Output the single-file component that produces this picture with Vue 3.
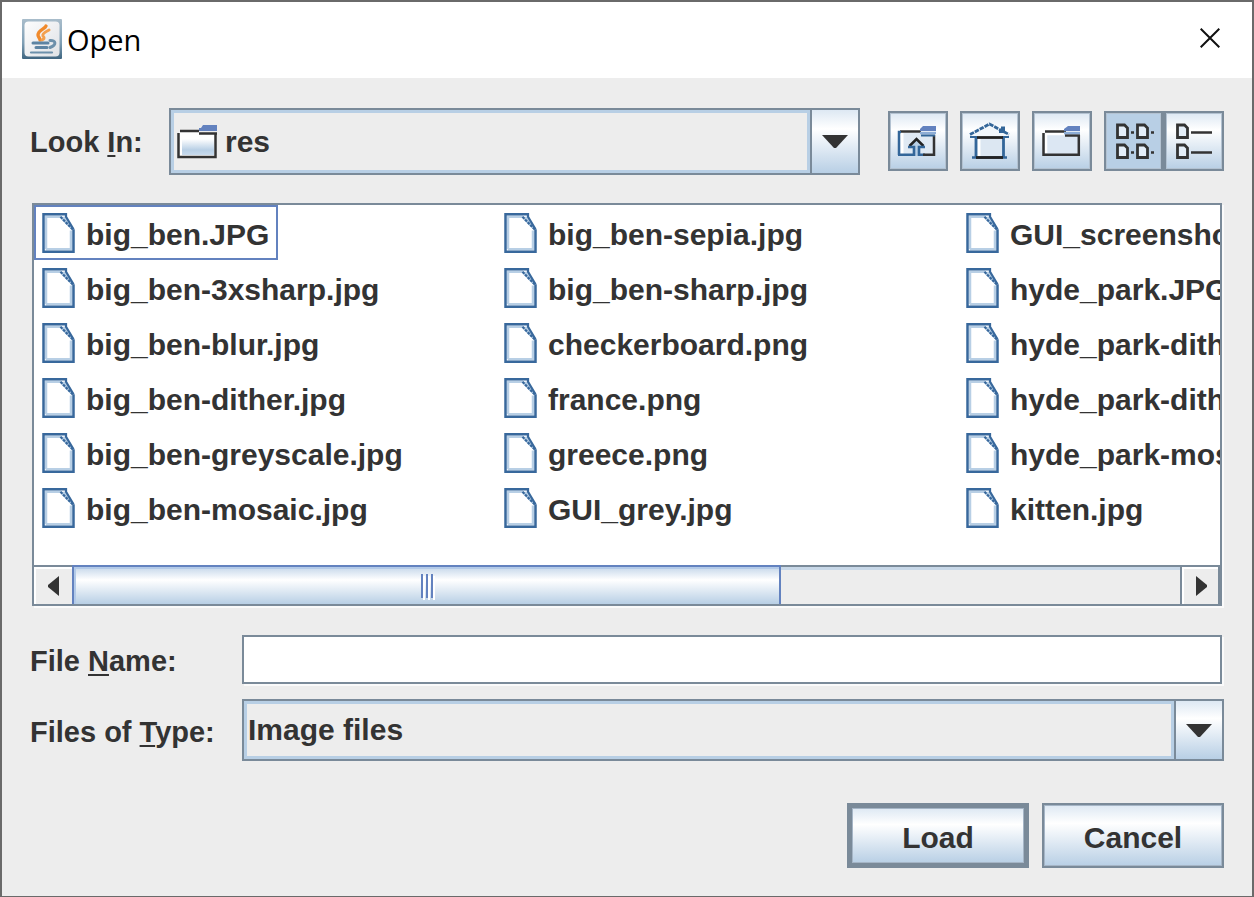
<script setup>
import { ref } from 'vue'

const files = [
  'big_ben.JPG',
  'big_ben-3xsharp.jpg',
  'big_ben-blur.jpg',
  'big_ben-dither.jpg',
  'big_ben-greyscale.jpg',
  'big_ben-mosaic.jpg',
  'big_ben-sepia.jpg',
  'big_ben-sharp.jpg',
  'checkerboard.png',
  'france.png',
  'greece.png',
  'GUI_grey.jpg',
  'GUI_screenshot.jpg',
  'hyde_park.JPG',
  'hyde_park-dither.jpg',
  'hyde_park-dither2.jpg',
  'hyde_park-mosaic.jpg',
  'kitten.jpg'
]

const focused = ref(0)
const folder = ref('res')
const fileName = ref('')
const fileType = ref('images')
const view = ref('list')
</script>

<template>
  <div class="dialog" role="dialog" aria-labelledby="dialog-title">
    <header class="titlebar">
      <svg class="logo" viewBox="0 0 40 40" aria-hidden="true">
        <defs>
          <linearGradient id="logo-edge" x1="0" y1="0" x2="0" y2="1">
            <stop offset="0" stop-color="#a9bdcb" />
            <stop offset="0.6" stop-color="#7f9fb5" />
            <stop offset="1" stop-color="#3f6580" />
          </linearGradient>
          <linearGradient id="logo-face" x1="0" y1="0" x2="1" y2="1">
            <stop offset="0" stop-color="#fdfdfd" />
            <stop offset="1" stop-color="#dfe2e6" />
          </linearGradient>
        </defs>
        <rect width="40" height="40" rx="1" fill="url(#logo-edge)" />
        <rect x="2.500" y="2.500" width="35" height="35" rx="4" fill="url(#logo-face)" />
        <g fill="none" stroke-linecap="round">
          <path d="M24 7C23 10 16 11 16 16C16 18 18 19 18 21" stroke="#f08a2c" stroke-width="3.400" />
          <path d="M27 11C23 13 20 15 21 17C23 19 22 20 20 21" stroke="#f3a04f" stroke-width="3" />
          <path d="M11 24H26M14 28.500H25" stroke="#5d84a3" stroke-width="3" />
          <path d="M28 21.500C34 21 35 26 28 28.500" stroke="#6c90ab" stroke-width="3" />
          <path d="M9 33.500H30" stroke="#6c90ab" stroke-width="2.200" />
        </g>
      </svg>
      <h1 id="dialog-title">Open</h1>
      <button class="close" type="button" aria-label="Close">
        <svg viewBox="0 0 20 20" aria-hidden="true">
          <path d="M0.7 0.7L19.3 19.3M19.3 0.7L0.7 19.3" stroke="#111" stroke-width="2" />
        </svg>
      </button>
    </header>

    <form class="content" @submit.prevent>
      <div class="look-row">
        <label class="look-label" for="look-in">Look <u>I</u>n:</label>
        <div class="combo combo-folder">
          <svg class="folder-icon" viewBox="0 0 40 34" aria-hidden="true">
            <defs>
              <linearGradient id="folder-fill" x1="0" y1="0" x2="0" y2="1">
                <stop offset="0.2" stop-color="#fff" />
                <stop offset="0.75" stop-color="#b8cfe5" />
                <stop offset="1" stop-color="#c8dbed" />
              </linearGradient>
            </defs>
            <path d="M1.5 32V8L4 6H22L24 9H39V32Z" fill="#fff" />
            <path d="M5 10H37V30H5Z" fill="url(#folder-fill)" />
            <path d="M3 6H22M1.5 8V32H38.5V9M22 8.5H40" fill="none" stroke="#333" stroke-width="2.5" />
            <path d="M26 0H40V6H22V3H24Z" fill="#6382bf" />
          </svg>
          <select id="look-in" v-model="folder">
            <option value="res">res</option>
          </select>
          <span class="arrow" aria-hidden="true"><svg viewBox="0 0 26 13"><path d="M0 0H26L14 13H12Z" fill="#333" /></svg></span>
        </div>
        <div class="tools">
          <button class="tool" type="button" aria-label="Up One Level">
            <svg viewBox="0 0 60 60" aria-hidden="true">
              <path d="M13 22H46V43H13Z" fill="#dfe9f3" />
              <path d="M14 22V43" stroke="#fff" stroke-width="3" />
              <path d="M12 20.5H33" stroke="#333" stroke-width="2.5" />
              <path d="M13 21H11V44M10 43.8H25M32 43.8H37" fill="none" stroke="#336699" stroke-width="2.5" />
              <path d="M35 43.8H46V24" fill="none" stroke="#333" stroke-width="2.5" />
              <path d="M35 15H48V20H32V18Z" fill="#6382bf" />
              <path d="M32 22H48" stroke="#8dadd6" stroke-width="2.5" />
              <path d="M33 24.5H47" stroke="#336699" stroke-width="2" />
              <path d="M28.500 29L21 36H26V45H31V36H36Z" fill="#b8cfe5" />
              <path d="M21.500 35L28.500 28L35.500 35" fill="none" stroke="#222" stroke-width="2.5" />
              <path d="M20 36H26V45M37 36H31V45" fill="none" stroke="#336699" stroke-width="2.6" />
            </svg>
          </button>
          <button class="tool" type="button" aria-label="Home">
            <svg viewBox="0 0 60 60" aria-hidden="true">
              <path d="M11 25L29.5 13L48 25V27H11Z" fill="#f2f7fb" />
              <path d="M17 28H43V46H17Z" fill="#dce7f2" />
              <path d="M19 28V45" stroke="#fff" stroke-width="3" />
              <path d="M39 18H41V15.500H45V22H39Z" fill="#336699" />
              <path d="M10 23.500L29.5 13L49 23.500" fill="none" stroke="#336699" stroke-width="2.8" stroke-dasharray="4.500 1" />
              <path d="M10 26H17M42 26H49" stroke="#336699" stroke-width="2" />
              <path d="M16 27V46M43.5 27V46" stroke="#336699" stroke-width="2.8" />
              <path d="M17 26.5H43" stroke="#222" stroke-width="2.8" />
              <path d="M12 46.5H47" stroke="#336699" stroke-width="2.6" />
              <path d="M16 46.5H43" stroke="#222" stroke-width="2.8" />
            </svg>
          </button>
          <button class="tool" type="button" aria-label="Create New Folder">
            <svg viewBox="0 0 60 60" aria-hidden="true">
              <path d="M11 22H47V43H11Z" fill="#dce7f3" />
              <path d="M14 42V23H32" fill="none" stroke="#fff" stroke-width="2.5" />
              <path d="M13 20.5H34M11.5 22V43.8H46.8V24M33 24.5H48" fill="none" stroke="#333" stroke-width="2.5" />
              <path d="M36 15H48V20H32V18Z" fill="#6382bf" />
              <path d="M32 22H48" stroke="#8dadd6" stroke-width="2.5" />
            </svg>
          </button>
          <div class="views" role="group" aria-label="View">
            <button class="tool" :class="{ pressed: view === 'list' }" type="button" aria-label="List" @click="view = 'list'">
              <svg viewBox="0 0 60 60" aria-hidden="true">
                <g fill="#e4eef8" stroke="#333" stroke-width="2.8">
                  <path d="M13.5 14H20.500L23.500 17V26.5H13.5Z" />
                  <path d="M33.5 14H40.500L43.500 17V26.5H33.5Z" />
                  <path d="M13.5 34H20.500L23.500 37V46.5H13.5Z" />
                  <path d="M33.5 34H40.500L43.500 37V46.5H33.5Z" />
                </g>
                <path d="M27 21.5H30M47 21.5H50M27 41.5H30M47 41.5H50" stroke="#333" stroke-width="2.5" />
              </svg>
            </button>
            <button class="tool" :class="{ pressed: view === 'details' }" type="button" aria-label="Details" @click="view = 'details'">
              <svg viewBox="0 0 60 60" aria-hidden="true">
                <g fill="#e4eef8" stroke="#333" stroke-width="2.8">
                  <path d="M13.5 14H20.500L23.500 17V26.5H13.5Z" />
                  <path d="M13.5 34H20.500L23.500 37V46.5H13.5Z" />
                </g>
                <path d="M27 21.5H48M27 41.5H48" stroke="#333" stroke-width="2.5" />
              </svg>
            </button>
          </div>
        </div>
      </div>

      <div class="list-pane">
        <ul class="files" role="listbox" aria-label="Files">
          <li
            v-for="(name, i) in files"
            :key="name"
            class="file"
            :class="{ focused: focused === i }"
            role="option"
            :aria-selected="focused === i"
            @click="focused = i"
          >
            <svg viewBox="0 0 13 16" aria-hidden="true">
              <path d="M0.5 0.5H9L12.5 6V15.5H0.5Z" fill="#fff" />
              <path d="M1.5 14.5V1.5H7.5M1.5 14.5H11.5V7" fill="none" stroke="#b8cfe5" />
              <path d="M7 1.500H9.500L12.500 6.500H11.500L8 3Z" fill="#b8cfe5" />
              <path d="M9.500 0.500H0.500V15.500H12.500V6.500" fill="none" stroke="#38689c" />
              <path d="M9.500 0V1.500L12.500 6.500" fill="none" stroke="#38689c" stroke-width="0.900" />
              <path d="M7.300 1.500L12.300 6.700" fill="none" stroke="#38689c" stroke-width="0.900" stroke-dasharray="1.100 0.400" />
            </svg>
            <span>{{ name }}</span>
          </li>
        </ul>
        <div class="scrollbar">
          <button class="scroll-btn left" type="button" aria-label="Scroll left">
            <svg viewBox="0 0 11 20" aria-hidden="true"><path d="M11 0V20L0 11V9Z" fill="#333" /></svg>
          </button>
          <div class="track">
            <div class="thumb"><i></i><i></i><i></i></div>
          </div>
          <button class="scroll-btn right" type="button" aria-label="Scroll right">
            <svg viewBox="0 0 11 20" aria-hidden="true"><path d="M0 0V20L11 11V9Z" fill="#333" /></svg>
          </button>
        </div>
      </div>

      <div class="fields">
        <label for="file-name">File <u>N</u>ame:</label>
        <input id="file-name" v-model="fileName" type="text" />
        <label for="file-type">Files of <u>T</u>ype:</label>
        <div class="combo combo-type">
          <select id="file-type" v-model="fileType">
            <option value="images">Image files</option>
          </select>
          <span class="arrow" aria-hidden="true"><svg viewBox="0 0 26 13"><path d="M0 0H26L14 13H12Z" fill="#333" /></svg></span>
        </div>
      </div>

      <div class="actions">
        <button class="action primary" type="submit">Load</button>
        <button class="action" type="button">Cancel</button>
      </div>
    </form>
  </div>
</template>

<style>
body {
  margin: 0;
  background: #ededed;
}
</style>

<style scoped>
* {
  box-sizing: border-box;
}

.dialog {
  display: flex;
  flex-direction: column;
  min-height: 100vh;
  border: 2px solid #6a6a6a;
  border-bottom-width: 1px;
  background: #ededed;
  color: #333;
  font: bold 30px/36px "Liberation Sans", Arial, sans-serif;
}

button,
input,
select {
  margin: 0;
  padding: 0;
  border: 0;
  border-radius: 0;
  background: none;
  color: inherit;
  font: inherit;
}

label {
  font-size: 29px;
}

svg {
  display: block;
}

u {
  text-decoration-thickness: 2px;
  text-underline-offset: 3px;
  text-decoration-skip-ink: none;
}

.titlebar {
  display: flex;
  align-items: center;
  height: 76px;
  padding: 0 32px 2px 20px;
  background: #fff;
}

.logo {
  width: 40px;
  height: 40px;
}

h1 {
  flex: 1;
  margin: 0 0 0 5px;
  padding-top: 2px;
  color: #000;
  font: 400 29px/40px "Open Sans", "Noto Sans", sans-serif;
}

.close {
  padding-bottom: 2px;
}

.close svg {
  width: 20px;
  height: 20px;
}

.content {
  display: flex;
  flex: 1;
  flex-direction: column;
  padding: 30px 28px 28px;
}

.look-row {
  display: flex;
  align-items: center;
}

.look-label {
  width: 139px;
}

.combo {
  display: flex;
  position: relative;
  flex: 1;
  min-width: 0;
  border: 2px solid #7a8a99;
  box-shadow: inset 0 0 0 1px #a9bdd1;
}

.combo select {
  flex: 1;
  min-width: 0;
  appearance: none;
  border: 3px solid #b8cfe5;
  outline: 0;
}

.combo-folder {
  height: 67px;
}

.combo-folder select {
  padding-left: 51px;
}

.combo-type {
  height: 62px;
}

.combo-type select {
  padding-left: 1px;
}

.folder-icon {
  position: absolute;
  left: 6px;
  top: 15px;
  width: 40px;
  height: 34px;
}

.arrow {
  display: flex;
  align-items: center;
  justify-content: center;
  width: 48px;
  border-left: 2px solid #7a8a99;
  background: linear-gradient(#dde8f3, #fff 30%, #b8cfe5);
  pointer-events: none;
}

.arrow svg {
  width: 26px;
  height: 13px;
}

.tools {
  display: flex;
  gap: 12px;
  margin: 0 0 2px 28px;
}

.tool {
  width: 60px;
  height: 60px;
  border: 2px solid #7a8a99;
  background: linear-gradient(#dde8f3, #fff 30%, #b8cfe5);
  box-shadow: inset 0 0 0 1px #b3c2d1;
}

.tool svg {
  width: 60px;
  height: 60px;
  margin: -2px;
}

.tool.pressed {
  background: #b8cfe5;
}

.views {
  display: flex;
}

.views .tool:first-child {
  border-right-width: 3px;
}

.list-pane {
  display: flex;
  flex: 1;
  flex-direction: column;
  margin: 28px 2px 0;
  border: 2px solid #7a8a99;
  background: #fff;
  box-shadow: 2px 2px 0 #fafafa;
}

.files {
  display: grid;
  flex: 1;
  grid-auto-columns: 462px;
  grid-auto-flow: column;
  grid-template-rows: repeat(6, 55px);
  min-width: 0;
  margin: 0;
  padding: 0;
  overflow: hidden;
  list-style: none;
}

.file {
  display: flex;
  align-items: center;
  gap: 11px;
  justify-self: start;
  padding: 0 7px 0 6px;
  border: 2px solid transparent;
  white-space: nowrap;
}

.file.focused {
  border-color: #6382bf;
}

.file svg {
  flex: none;
  width: 33px;
  height: 40px;
}

.file span {
  padding-top: 5px;
}

.scrollbar {
  display: flex;
  height: 39px;
  border-top: 2px solid #7a8a99;
  background: #ededed;
}

.scroll-btn {
  display: flex;
  align-items: center;
  justify-content: center;
  width: 38px;
  box-shadow: inset 2px 2px 0 #fff;
}

.scroll-btn svg {
  width: 11px;
  height: 20px;
}

.scroll-btn.right {
  width: 40px;
  padding-left: 3px;
  border-right: 2px solid #7a8a99;
  border-left: 2px solid #7a8a99;
}

.track {
  flex: 1;
  box-shadow: inset 0 3px 0 #c8d8e8;
}

.thumb {
  display: flex;
  align-items: center;
  justify-content: center;
  gap: 3px;
  width: 64%;
  height: 39px;
  margin-top: -2px;
  border: 2px solid #6382bf;
  border-bottom: 0;
  background: linear-gradient(#c5d7ea, #fff 35%, #b8cfe5);
  box-shadow: inset 2px 2px 0 #b3cae8;
}

.thumb i {
  width: 2px;
  height: 24px;
  background: #6382bf;
  box-shadow: 2px 2px 0 #fff;
}

.fields {
  display: grid;
  grid-template-columns: 212px 1fr;
  align-items: center;
  row-gap: 15px;
  margin-top: 29px;
}

.fields input {
  width: calc(100% - 2px);
  height: 49px;
  padding: 0 6px;
  border: 2px solid #7a8a99;
  outline: 0;
  background: #fff;
  box-shadow: 2px 2px 0 #fafafa;
}

.fields label {
  padding-top: 3px;
}

.actions {
  display: flex;
  justify-content: flex-end;
  gap: 13px;
  margin-top: 42px;
}

.action {
  width: 182px;
  height: 65px;
  padding-top: 4px;
  border: 2px solid #7a8a99;
  background: linear-gradient(#dde8f3, #fff 30%, #b8cfe5);
  box-shadow: inset 0 0 0 1px #a5b5c6;
}

.action.primary {
  border-width: 5px;
}
</style>
